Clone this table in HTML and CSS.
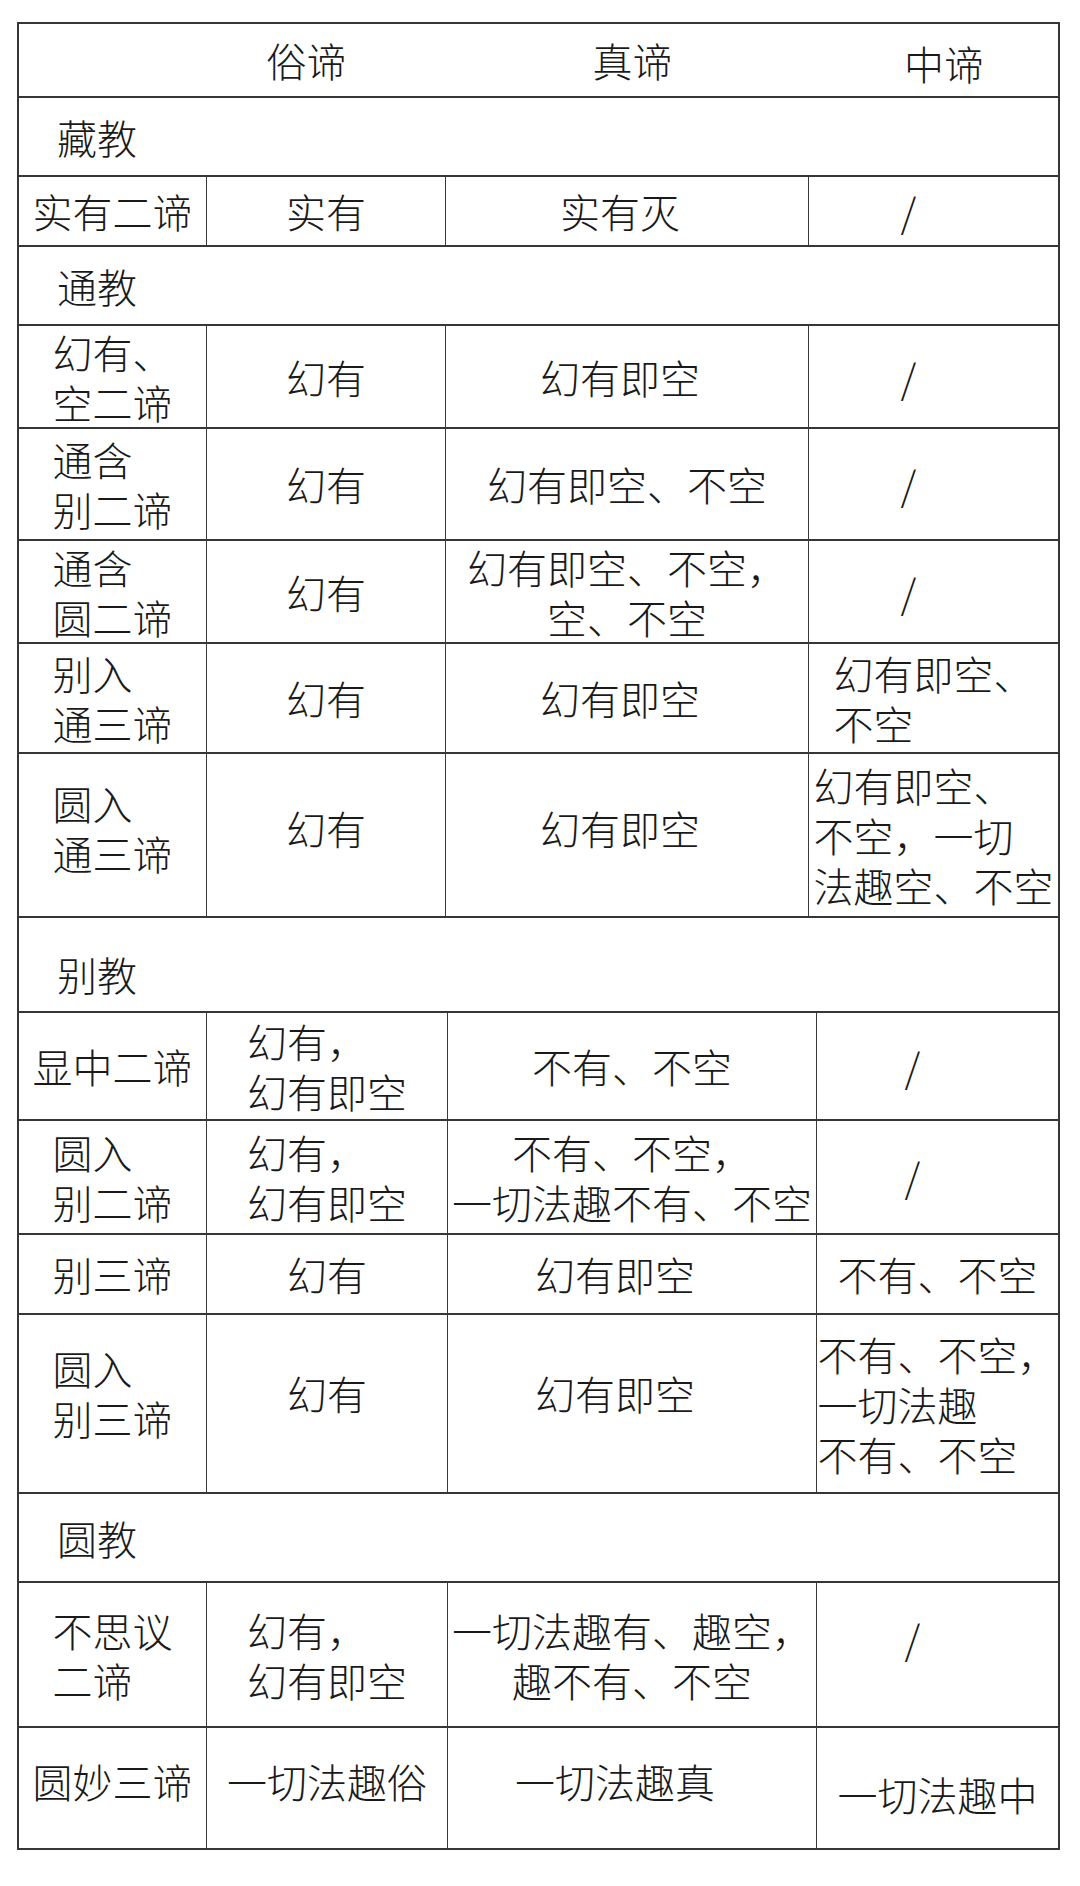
FILE: index.html
```html
<!DOCTYPE html>
<html lang="zh-CN">
<head>
<meta charset="utf-8">
<title>四教二谛三谛表</title>
<link rel="stylesheet" href="styles.css">
</head>
<body>
<div class="sheet">
  <div class="head">
    <div class="hc hc1"></div>
    <div class="hc hc2">俗谛</div>
    <div class="hc hc3">真谛</div>
    <div class="hc hc4">中谛</div>
  </div>

  <section class="sec sec-a">
    <div class="sec-title h79">藏教</div>
    <div class="row h70">
      <div class="cell"><span class="t">实有二谛</span></div>
      <div class="cell"><span class="t">实有</span></div>
      <div class="cell shift-s"><span class="t">实有灭</span></div>
      <div class="cell slash"><span class="t">/</span></div>
    </div>

    <div class="sec-title h79">通教</div>
    <div class="row h103">
      <div class="cell"><span class="t">幻有、<br>空二谛</span></div>
      <div class="cell"><span class="t">幻有</span></div>
      <div class="cell shift-s"><span class="t">幻有即空</span></div>
      <div class="cell slash"><span class="t">/</span></div>
    </div>
    <div class="row h112">
      <div class="cell"><span class="t">通含<br>别二谛</span></div>
      <div class="cell"><span class="t">幻有</span></div>
      <div class="cell"><span class="t">幻有即空、不空</span></div>
      <div class="cell slash"><span class="t">/</span></div>
    </div>
    <div class="row h103">
      <div class="cell"><span class="t">通含<br>圆二谛</span></div>
      <div class="cell"><span class="t">幻有</span></div>
      <div class="cell"><span class="t tc">幻有即空、不空，<br>空、不空</span></div>
      <div class="cell slash"><span class="t">/</span></div>
    </div>
    <div class="row h110">
      <div class="cell"><span class="t">别入<br>通三谛</span></div>
      <div class="cell"><span class="t">幻有</span></div>
      <div class="cell shift-s"><span class="t">幻有即空</span></div>
      <div class="cell"><span class="t">幻有即空、<br>不空</span></div>
    </div>
    <div class="row h164">
      <div class="cell up14"><span class="t">圆入<br>通三谛</span></div>
      <div class="cell up14"><span class="t">幻有</span></div>
      <div class="cell up14 shift-s"><span class="t">幻有即空</span></div>
      <div class="cell"><span class="t">幻有即空、<br>不空，一切<br>法趣空、不空</span></div>
    </div>
  </section>

  <section class="sec sec-b">
    <div class="sec-title h95 low">别教</div>
    <div class="row h108">
      <div class="cell"><span class="t">显中二谛</span></div>
      <div class="cell"><span class="t">幻有，<br>幻有即空</span></div>
      <div class="cell"><span class="t">不有、不空</span></div>
      <div class="cell slash"><span class="t">/</span></div>
    </div>
    <div class="row h114">
      <div class="cell"><span class="t">圆入<br>别二谛</span></div>
      <div class="cell"><span class="t">幻有，<br>幻有即空</span></div>
      <div class="cell"><span class="t tc">不有、不空，<br>一切法趣不有、不空</span></div>
      <div class="cell slash top"><span class="t">/</span></div>
    </div>
    <div class="row h80">
      <div class="cell"><span class="t">别三谛</span></div>
      <div class="cell"><span class="t">幻有</span></div>
      <div class="cell shift-l"><span class="t">幻有即空</span></div>
      <div class="cell"><span class="t">不有、不空</span></div>
    </div>
    <div class="row h179">
      <div class="cell up20"><span class="t">圆入<br>别三谛</span></div>
      <div class="cell up20"><span class="t">幻有</span></div>
      <div class="cell up20 shift-l"><span class="t">幻有即空</span></div>
      <div class="cell"><span class="t">不有、不空，<br>一切法趣<br>不有、不空</span></div>
    </div>

    <div class="sec-title h89">圆教</div>
    <div class="row h145">
      <div class="cell"><span class="t">不思议<br>二谛</span></div>
      <div class="cell"><span class="t">幻有，<br>幻有即空</span></div>
      <div class="cell"><span class="t tc">一切法趣有、趣空，<br>趣不有、不空</span></div>
      <div class="cell slash top"><span class="t">/</span></div>
    </div>
    <div class="row h122 last">
      <div class="cell up14"><span class="t">圆妙三谛</span></div>
      <div class="cell up14"><span class="t">一切法趣俗</span></div>
      <div class="cell up14 shift-l"><span class="t">一切法趣真</span></div>
      <div class="cell down6"><span class="t">一切法趣中</span></div>
    </div>
  </section>
</div>
</body>
</html>
```

FILE: styles.css
```css
html, body {
  margin: 0;
  padding: 0;
  background: #ffffff;
}

body {
  font-family: "Noto Sans CJK SC", "Noto Sans", sans-serif;
  font-weight: 300;
  font-size: 40px;
  line-height: 50px;
  color: #1a1a1a;
}

.sheet {
  margin: 22px 0 0 17px;
  width: 1043px;
  box-sizing: border-box;
  border: 2px solid #363636;
}

.head {
  display: grid;
  grid-template-columns: 187px 239px 363px 1fr;
  height: 72px;
  align-items: center;
}

.hc {
  text-align: center;
  white-space: nowrap;
}

.hc2 { padding-right: 38px; }
.hc3 { padding-left: 12px; }
.hc4 { padding-left: 22px; padding-top: 6px; }

.sec-a { --cols: 187px 239px 363px 1fr; }
.sec-b { --cols: 187px 241px 369px 1fr; }

.sec-title {
  box-sizing: border-box;
  border-top: 2px solid #363636;
  display: flex;
  align-items: center;
  padding-left: 38px;
}

.sec-title.low { padding-top: 18px; }

.row {
  box-sizing: border-box;
  display: grid;
  grid-template-columns: var(--cols);
  border-top: 2px solid #363636;
}

.cell {
  display: flex;
  align-items: center;
  justify-content: center;
  border-left: 1px solid #3a3a3a;
  box-sizing: border-box;
  min-width: 0;
}

.cell:first-child { border-left: none; }

.t {
  display: inline-block;
  text-align: left;
  white-space: nowrap;
}

.t.tc { text-align: center; }

.slash { padding-right: 50px; }
.slash.top {
  align-items: flex-start;
  padding-top: 30px;
}

.up14 { padding-bottom: 14px; }
.up20 { padding-bottom: 22px; }
.down6 { padding-top: 12px; }
.shift-l { padding-right: 34px; }
.shift-s { padding-right: 14px; }

.h70 { height: 70px; }
.h79 { height: 79px; }
.h80 { height: 80px; }
.h89 { height: 89px; }
.h95 { height: 95px; }
.h103 { height: 103px; }
.h108 { height: 108px; }
.h110 { height: 110px; }
.h112 { height: 112px; }
.h114 { height: 114px; }
.h122 { height: 122px; }
.h145 { height: 145px; }
.h164 { height: 164px; }
.h179 { height: 179px; }
```
